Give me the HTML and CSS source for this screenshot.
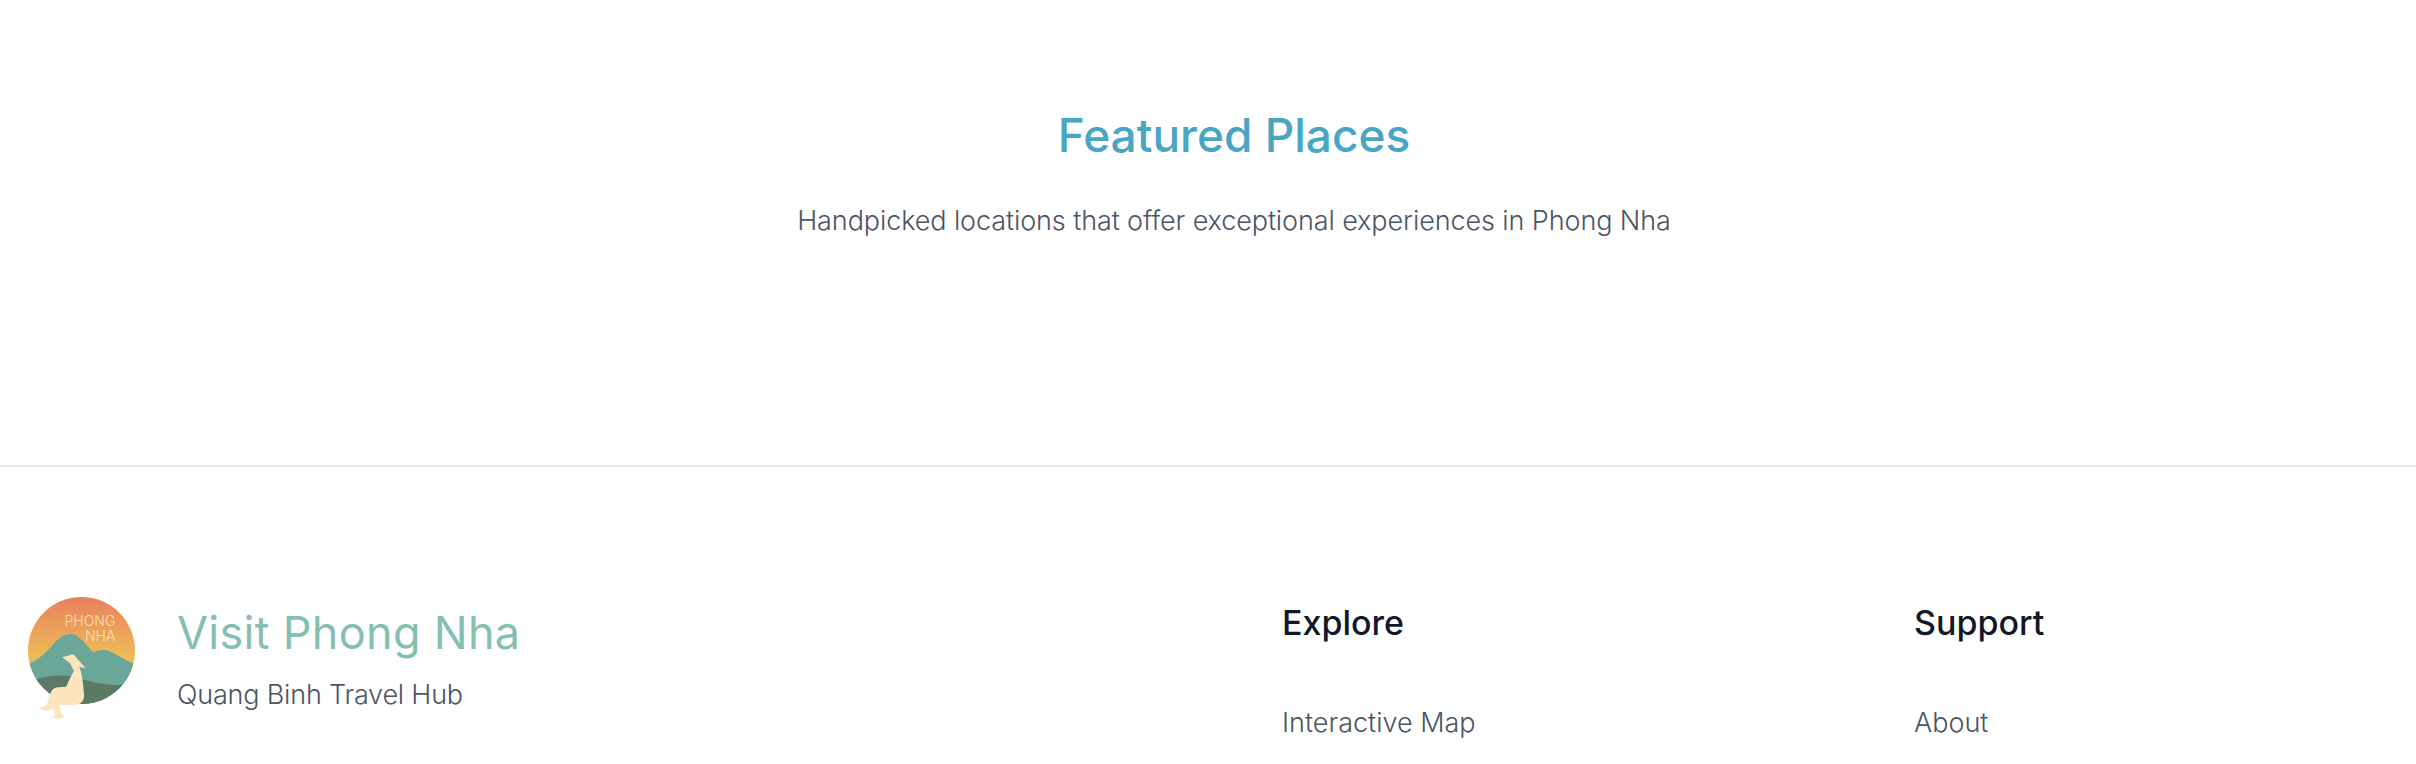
FILE: index.html
```html
<!DOCTYPE html>
<html lang="en">
<head>
<meta charset="utf-8">
<title>Visit Phong Nha</title>
<link rel="stylesheet" href="styles.css">
</head>
<body>
<main class="featured">
  <h2 class="featured-title">Featured Places</h2>
  <p class="featured-sub">Handpicked locations that offer exceptional experiences in Phong Nha</p>
</main>
<footer class="footer">
  <div class="brand">
    <svg class="logo" viewBox="0 0 120 126" width="120" height="126" aria-label="Visit Phong Nha logo">
      <defs>
        <linearGradient id="sky" x1="0" y1="0" x2="0" y2="1">
          <stop offset="0" stop-color="#e9805f"/>
          <stop offset="0.52" stop-color="#edb858"/>
          <stop offset="1" stop-color="#edb858"/>
        </linearGradient>
        <clipPath id="disc"><circle cx="53.5" cy="53.5" r="53.5"/></clipPath>
      </defs>
      <circle cx="53.5" cy="53.5" r="53.5" fill="url(#sky)"/>
      <g clip-path="url(#disc)">
        <g transform="translate(-18 -8) scale(.33333)">
          <path fill="#6aa799" d="M50 228 C85 212 105 195 130 165 C150 142 170 132 190 136 C212 142 228 170 250 190 C265 184 285 178 305 190 C325 200 350 218 380 226 L380 360 L50 360 Z"/>
          <path fill="#5a7a66" d="M75 272 C115 260 160 256 195 264 C235 276 290 294 350 286 L380 360 L70 360 Z"/>
        </g>
      </g>
      <g transform="translate(-18 -8) scale(.33333)">
        <text class="logo-text" x="316" y="110" text-anchor="end">PHONG</text>
        <text class="logo-text" x="316" y="155" text-anchor="end">NHA</text>
      </g>
      <g transform="translate(-8 -8) scale(.33333)">
        <path fill="#fbe5bc" d="M127 205 L160 196 L197 238 L178 233 L180 240 C186 255 190 285 192 318 C193 332 185 345 170 347 L118 349 L122 368 L133 384 C122 390 108 390 100 384 L106 376 L98 358 C90 364 78 366 68 364 L55 358 C65 353 75 354 80 347 L92 312 C96 300 104 296 115 295 L139 293 C144 278 155 258 162 245 L150 223 Z"/>
      </g>
    </svg>
    <div class="brand-text">
      <div class="brand-name">Visit Phong Nha</div>
      <div class="brand-tag">Quang Binh Travel Hub</div>
    </div>
  </div>
  <nav class="col">
    <h3 class="col-title">Explore</h3>
    <a class="col-link" href="#">Interactive Map</a>
  </nav>
  <nav class="col">
    <h3 class="col-title">Support</h3>
    <a class="col-link" href="#">About</a>
  </nav>
</footer>
</body>
</html>
```
FILE: styles.css
```css
html, body { margin: 0; padding: 0; background: #fff; overflow: hidden; }
body { font-family: Inter, "Noto Sans", sans-serif; color: #4b5563; }

.featured { height: 465px; box-sizing: border-box; padding: 107px 0 0 52px; text-align: center; }
.featured-title { margin: 0; font-size: 46px; line-height: 56px; font-weight: 500; color: #4aa5c2; }
.featured-sub { margin: 40px 0 0; font-size: 27px; line-height: 36px; font-weight: 300; letter-spacing: -0.1px; }

.footer { border-top: 2px solid #e5e7eb; padding: 130px 28px 0; display: grid; grid-template-columns: 1254px 632px 1fr; }
.brand { display: flex; gap: 29px; align-items: flex-start; }
.logo { display: block; flex: none; }
.logo-text { font-size: 42px; fill: #f9dfb5; font-weight: 300; }
.brand-name { font-size: 45px; line-height: 56px; font-weight: 400; color: #84bfb2; margin-top: 8px; letter-spacing: 0.3px; }
.brand-tag { font-size: 27px; line-height: 36px; font-weight: 300; margin-top: 16px; letter-spacing: -0.2px; }
.col { display: flex; flex-direction: column; }
.col-title { margin: 4px 0 0; font-size: 34px; line-height: 44px; font-weight: 500; color: #111827; }
.col-link { font-size: 27px; line-height: 36px; font-weight: 300; color: #4b5563; text-decoration: none; margin-top: 60px; }
```
